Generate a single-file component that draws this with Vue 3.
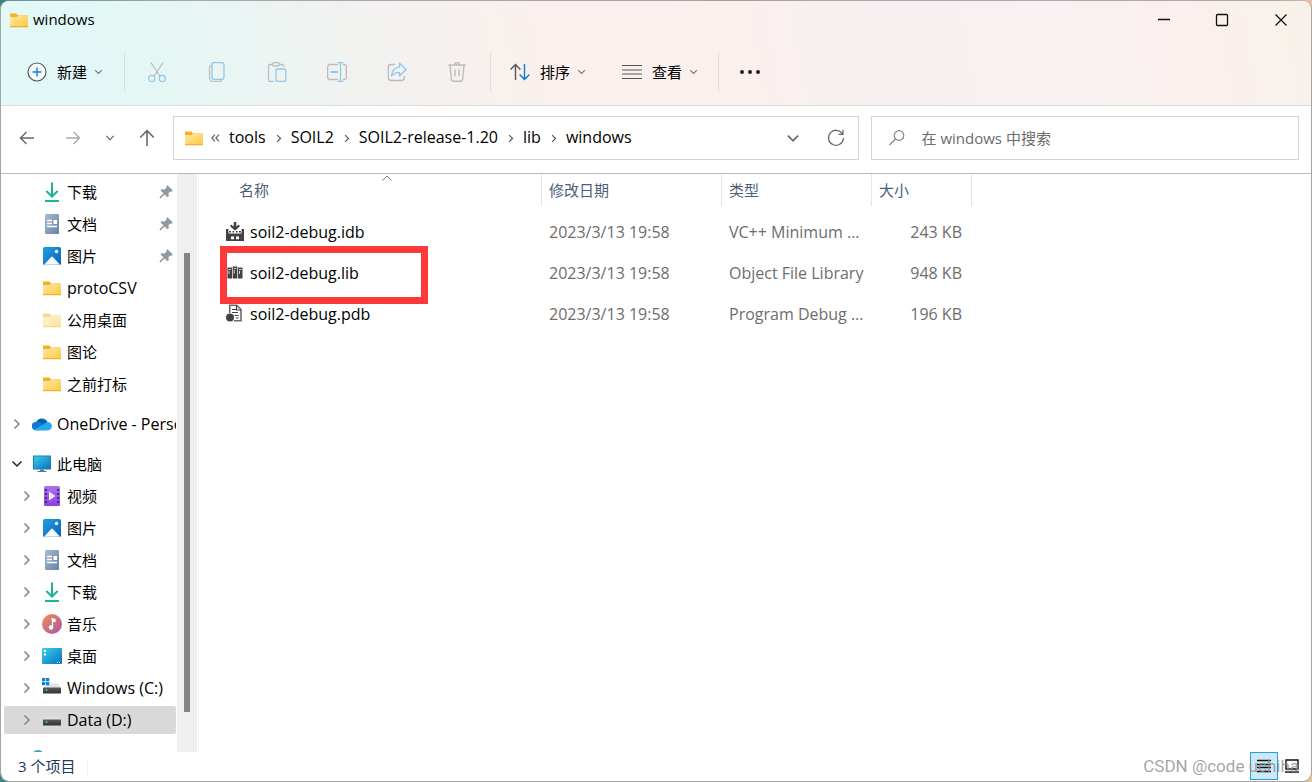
<script setup>
const places = [
  { name: '下载', icon: 'download', pinned: true },
  { name: '文档', icon: 'document', pinned: true },
  { name: '图片', icon: 'picture', pinned: true },
  { name: 'protoCSV', icon: 'folder', latin: true },
  { name: '公用桌面', icon: 'folder', faded: true },
  { name: '图论', icon: 'folder' },
  { name: '之前打标', icon: 'folder' },
  { name: 'OneDrive - Personal', icon: 'onedrive', root: true, arrow: 'right', latin: true },
  { name: '此电脑', icon: 'computer', root: true, arrow: 'down' },
  { name: '视频', icon: 'video', arrow: 'right' },
  { name: '图片', icon: 'picture', arrow: 'right' },
  { name: '文档', icon: 'document', arrow: 'right' },
  { name: '下载', icon: 'download', arrow: 'right' },
  { name: '音乐', icon: 'music', arrow: 'right' },
  { name: '桌面', icon: 'desktop', arrow: 'right' },
  { name: 'Windows (C:)', icon: 'drive-c', arrow: 'right', latin: true },
  { name: 'Data (D:)', icon: 'drive', arrow: 'right', selected: true, latin: true },
]

const crumbs = ['tools', 'SOIL2', 'SOIL2-release-1.20', 'lib', 'windows']

const files = [
  { name: 'soil2-debug.idb', icon: 'idb', date: '2023/3/13 19:58', type: 'VC++ Minimum ...', size: '243 KB' },
  { name: 'soil2-debug.lib', icon: 'lib', date: '2023/3/13 19:58', type: 'Object File Library', size: '948 KB', marked: true },
  { name: 'soil2-debug.pdb', icon: 'pdb', date: '2023/3/13 19:58', type: 'Program Debug ...', size: '196 KB' },
]

const tools = [
  { id: 'cut', label: '剪切' },
  { id: 'copy', label: '复制' },
  { id: 'paste', label: '粘贴' },
  { id: 'rename', label: '重命名' },
  { id: 'share', label: '共享' },
  { id: 'trash', label: '删除' },
]
</script>

<template>
  <svg class="sprite" aria-hidden="true">
    <defs>
      <linearGradient id="gFolder" x1="0" y1="0" x2="1" y2="1"><stop offset="0" stop-color="#ffe9a6" /><stop offset="1" stop-color="#ffc83d" /></linearGradient>
      <linearGradient id="gDoc" x1="0" y1="0" x2="1" y2="1"><stop offset="0" stop-color="#a9bdd3" /><stop offset="1" stop-color="#66819f" /></linearGradient>
      <linearGradient id="gPic" x1="0" y1="0" x2="1" y2="1"><stop offset="0" stop-color="#1f9fe6" /><stop offset="1" stop-color="#0a62b5" /></linearGradient>
      <linearGradient id="gScreen" x1="0" y1="0" x2="1" y2="1"><stop offset="0" stop-color="#36d3e4" /><stop offset="1" stop-color="#0c6fc4" /></linearGradient>
      <linearGradient id="gVideo" x1="0" y1="0" x2="0" y2="1"><stop offset="0" stop-color="#a972f0" /><stop offset="1" stop-color="#8840e0" /></linearGradient>
      <linearGradient id="gMusic" x1="0" y1="0" x2="1" y2="1"><stop offset="0" stop-color="#f19252" /><stop offset="1" stop-color="#a851aa" /></linearGradient>
      <linearGradient id="gDrive" x1="0" y1="0" x2="0" y2="1"><stop offset="0" stop-color="#5c5c5c" /><stop offset="1" stop-color="#303030" /></linearGradient>
    </defs>
    <symbol id="i-folder" viewBox="0 0 20 20">
      <path d="M1 3.500h6.500l1.600 2H19v11H1z" fill="#f5b21b" />
      <path d="M1 7h6.800l1.400-1.200H19v11H1z" fill="url(#gFolder)" />
      <path d="M1 16.200h18v1H1z" fill="#e9a91c" />
    </symbol>
    <symbol id="i-download" viewBox="0 0 20 20" fill="none" stroke="#1bb394" stroke-width="2">
      <path d="M10 .5v13.800M4.300 9l5.700 5.500L15.700 9M3 19h14" />
    </symbol>
    <symbol id="i-document" viewBox="0 0 20 20">
      <rect x="3" y="0" width="14" height="20" rx="1" fill="url(#gDoc)" />
      <path d="M5 6.500h5M5 9.500h5M5 12.500h10" stroke="#fff" stroke-width="1.300" />
      <path d="M11.500 6h3.500v4h-3.500z" fill="#fff" />
    </symbol>
    <symbol id="i-picture" viewBox="0 0 20 20">
      <rect x="1" y="1" width="18" height="18" rx="1.500" fill="url(#gPic)" />
      <path d="M2 18.800 9.200 11a1.200 1.200 0 0 1 1.700 0L18 18.800z" fill="#f4faff" />
      <circle cx="14.500" cy="5.500" r="1.700" fill="#fff" />
    </symbol>
    <symbol id="i-onedrive" viewBox="0 0 20 20">
      <path d="M4 8.200A6.400 6.400 0 0 1 15.600 8L11 13 3 16.200z" fill="#0364b8" />
      <path d="M3.800 8c2-.4 3.600.1 5 1.100l6 3.900-9.800 3.200H4.200A4.100 4.100 0 0 1 3.800 8z" fill="#0f78d4" />
      <path d="M15.500 8a4.200 4.200 0 0 1 .3 8.400H4.500a4 4 0 0 1-2.500-.9L10.500 11l3-2.200a5 5 0 0 1 2-.8z" fill="#28a8ea" />
    </symbol>
    <symbol id="i-computer" viewBox="0 0 20 20">
      <rect x="1" y="1.500" width="18" height="14" fill="#1580b5" />
      <rect x="2" y="2.500" width="16" height="12" fill="url(#gScreen)" />
      <path d="M8 15.500h4v1.500h2.500v1h-9v-1H8z" fill="#68737c" />
    </symbol>
    <symbol id="i-video" viewBox="0 0 20 20">
      <rect x="2" y="0" width="16" height="20" rx="1.500" fill="url(#gVideo)" />
      <path d="M4 3v15M16 3v15" stroke="#40207a" stroke-width="1.800" stroke-dasharray="2 2" />
      <path d="m7 5.500 6.500 4.500L7 14.500z" fill="#f3eafd" />
    </symbol>
    <symbol id="i-music" viewBox="0 0 20 20">
      <circle cx="10" cy="10" r="10" fill="url(#gMusic)" />
      <path d="M9.500 4.500 13 5.500V7.500l-2.500-.6v6.300" stroke="#fff" stroke-width="1.300" fill="#fff" />
      <circle cx="9" cy="13.500" r="2.200" fill="#fff" />
    </symbol>
    <symbol id="i-desktop" viewBox="0 0 20 20">
      <rect x="0" y="2" width="20" height="16" rx="1" fill="url(#gScreen)" />
      <path d="M2 4h2v2H2zM2 7.500h2v2H2zM15 16h1v1h-1zM17 16h1v1h-1z" fill="#fff" />
    </symbol>
    <symbol id="i-drive" viewBox="0 0 20 20">
      <path d="M4 6.500h12l3 4H1z" fill="#dfe1e3" />
      <rect x="1" y="9.500" width="18" height="6" rx=".5" fill="url(#gDrive)" />
      <circle cx="4.500" cy="12" r="1" fill="#3be04a" />
    </symbol>
    <symbol id="i-drive-c" viewBox="0 0 20 20">
      <path d="M7 5.500h9l3 4.500H1z" fill="#dfe1e3" />
      <rect x="1" y="9.500" width="18" height="6" rx=".5" fill="url(#gDrive)" />
      <circle cx="4.500" cy="12" r="1" fill="#3be04a" />
      <path d="M0 0h3.300v3.300H0zM4 0h3.300v3.300H4zM0 4h3.300v3.300H0zM4 4h3.300v3.300H4z" fill="#0a84d8" />
    </symbol>
    <symbol id="i-network" viewBox="0 0 20 20">
      <circle cx="6" cy="6" r="6" fill="#3f9fc0" />
    </symbol>
    <symbol id="i-pin" viewBox="0 0 14 14">
      <path d="M8.500.5 13.500 5.500 12.500 6.500 11.300 6.200 9.200 8.400 9.500 11 8.500 12 5.600 9.200 1.500 13.200.700 12.400 4.700 8.300 1.800 5.500 2.800 4.500 5.500 4.800 7.800 2.700 7.500 1.500z" fill="#8e9aa3" stroke="#8e9aa3" stroke-width=".5" />
    </symbol>
    <symbol id="i-right" viewBox="0 0 8 12" fill="none" stroke="currentColor" stroke-width="1.500">
      <path d="m1.500 1.500 4.500 4.500-4.500 4.500" />
    </symbol>
    <symbol id="i-down" viewBox="0 0 12 8" fill="none" stroke="currentColor" stroke-width="1.500">
      <path d="m1.500 1.500 4.500 4.500 4.500-4.500" />
    </symbol>
    <symbol id="i-more" viewBox="0 0 9 8" fill="none" stroke="#666" stroke-width="1.200">
      <path d="M4 .7.900 4 4 7.300M8 .7 4.900 4 8 7.300" />
    </symbol>
    <symbol id="i-new" viewBox="0 0 20 20" fill="none">
      <circle cx="10" cy="10" r="9" stroke="#555" stroke-width="1.200" fill="#f5fbfb" />
      <path d="M10 5.500v9M5.500 10h9" stroke="#0f7fd4" stroke-width="1.400" />
    </symbol>
    <symbol id="i-cut" viewBox="0 0 20 20" fill="none" stroke-width="1.200">
      <path d="M4 .7 12.800 14M16 .7 7.200 14" stroke="#b9bcbd" />
      <circle cx="4.700" cy="16.500" r="3.100" stroke="#8fc7eb" />
      <circle cx="15.300" cy="16.500" r="3.100" stroke="#8fc7eb" />
    </symbol>
    <symbol id="i-copy" viewBox="0 0 20 20" fill="none" stroke-width="1.300">
      <path d="M4.500 3.500a2 2 0 0 0-2 2V16a3.500 3.500 0 0 0 3.500 3.500h6.500a2 2 0 0 0 2-1.500" stroke="#bfc2c3" />
      <rect x="5" y=".7" width="12" height="16.600" rx="2" stroke="#8fc7eb" />
    </symbol>
    <symbol id="i-paste" viewBox="0 0 20 20" fill="none" stroke-width="1.300">
      <path d="M6 2.500H3.200A1.700 1.700 0 0 0 1.500 4.200v13.600a1.700 1.700 0 0 0 1.700 1.700H7M13 2.500h1.800a1.700 1.700 0 0 1 1.700 1.700V5" stroke="#bbbdbe" />
      <rect x="5.500" y=".7" width="7" height="3.300" rx="1.600" stroke="#bbbdbe" />
      <rect x="9" y="7" width="9.800" height="12.500" rx="1.400" stroke="#8fc7eb" />
    </symbol>
    <symbol id="i-rename" viewBox="0 0 20 20" fill="none" stroke-width="1.300">
      <path d="M11 2.500H2.500A2.200 2.200 0 0 0 .7 4.700v10.600a2.200 2.200 0 0 0 2 2.200H11M16 2.500h1.300a2 2 0 0 1 2 2.200v10.600a2 2 0 0 1-2 2.200H16" stroke="#bbb" />
      <path d="M10.700.7h5.600M10.700 19.300h5.600M13.500.7v18.600" stroke="#8fc7eb" />
      <path d="M3.500 10h7.500" stroke="#8fc7eb" stroke-width="1.800" />
    </symbol>
    <symbol id="i-share" viewBox="0 0 20 20" fill="none" stroke-width="1.300" stroke-linejoin="round">
      <path d="M8 2.500H4A2.700 2.700 0 0 0 1.300 5.200v10.600A2.700 2.700 0 0 0 4 18.500h10.600a2.700 2.700 0 0 0 2.700-2.700V14" stroke="#bbb" />
      <path d="M12.500 1.200 19.200 7.500l-6.700 6.300v-3.500c-3.500 0-6 1-8 3.700.5-5 3.300-8.700 8-9.200z" stroke="#8fc7eb" />
    </symbol>
    <symbol id="i-trash" viewBox="0 0 20 20" fill="none" stroke="#bdbab9" stroke-width="1.400">
      <path d="M1.500 3h17M3 3l1.300 14a2.400 2.400 0 0 0 2.300 2.200h6.800a2.400 2.400 0 0 0 2.300-2.200L17 3M7.500 3a2.500 2.500 0 0 1 5 0M8 7.500v7M12 7.500v7" />
    </symbol>
    <symbol id="i-sort" viewBox="0 0 20 20" fill="none" stroke-width="1.400">
      <path d="M5.500 18V2.500M.6 7.500l4.900-5 4.900 5" stroke="#555" />
      <path d="M14.500 2v15.500M9.600 12.500l4.900 5 4.900-5" stroke="#0f7bd6" />
    </symbol>
    <symbol id="i-view" viewBox="0 0 20 20" stroke="#555" stroke-width="1.200">
      <path d="M0 3.500h20M0 8h20M0 12h20M0 16.500h20" />
    </symbol>
    <symbol id="i-dots" viewBox="0 0 22 20" fill="#222">
      <circle cx="3" cy="10" r="2" /><circle cx="11" cy="10" r="2" /><circle cx="19" cy="10" r="2" />
    </symbol>
    <symbol id="i-arrow" viewBox="0 0 16 16" fill="none" stroke="currentColor" stroke-width="1.400">
      <path d="M15 8H1.500M7.500 2l-6 6 6 6" />
    </symbol>
    <symbol id="i-refresh" viewBox="0 0 20 20" fill="none" stroke="#6b6b6b" stroke-width="1.300">
      <path d="M16.500 6A7.500 7.500 0 1 0 17.500 10M17 1.800v4.500h-4.500" />
    </symbol>
    <symbol id="i-search" viewBox="0 0 18 18" fill="none" stroke="#858585" stroke-width="1.200">
      <circle cx="11" cy="6.500" r="4.800" /><path d="m7.500 10-6 6" />
    </symbol>
    <symbol id="i-idb" viewBox="0 0 20 20" fill="#424242">
      <path d="M8.700 0h2.600v4.500l2.600-2 1 1.800L10 8.800 5.100 4.300l1-1.800 2.600 2z" />
      <path d="M1 7h2.500v3h13V7H19v12H1z" />
      <path d="M3.500 8.500h13v3h-13z" fill="#fff" />
      <path d="M4 9h2v1.500H4zM7.500 9H9v1.500H7.500zM11 9h1.500v1.500H11zM14 9h2v1.500h-2z" />
      <path d="M6 14.500h3v2.800H6zM11 14.500h3v2.800h-3z" fill="#fff" />
    </symbol>
    <symbol id="i-lib" viewBox="0 0 20 20">
      <path d="M2.500 4.500h4.500v11H2.500zM7.700 3.500h4.600v12H7.700zM13 4.500h4.500v11H13z" fill="#424242" />
      <path d="M3.500 6h2.300v1H3.500zM3.500 8h1v3h-1zM9 5h2v1H9zM8.700 7h1v3.500h-1zM14 6h2.500v1H14zM14 8h1v3h-1z" fill="#d5d5d5" />
    </symbol>
    <symbol id="i-pdb" viewBox="0 0 20 20">
      <path d="M4.700 9V1.200h7L16 5.500v11.300H9" fill="#fff" stroke="#6b6b6b" stroke-width="1.600" />
      <path d="M7 5.500h4M7 8.500h6M9.500 11.500h4M11 14h2.500M11.500 1.500V6H16" stroke="#424242" stroke-width="1.200" fill="none" />
      <circle cx="5" cy="13.500" r="4" fill="#424242" />
    </symbol>
  </svg>

  <main class="window">
    <header class="chrome">
      <div class="titlebar">
        <svg class="ic20"><use href="#i-folder" /></svg>
        <h1>windows</h1>
        <div class="controls">
          <button aria-label="最小化"><svg viewBox="0 0 14 14"><path d="M1 6.500h12" /></svg></button>
          <button aria-label="最大化"><svg viewBox="0 0 14 14"><rect x="1.500" y="1.500" width="11" height="11" rx="1" /></svg></button>
          <button aria-label="关闭"><svg viewBox="0 0 14 14"><path d="m1.500 1.500 11 11M12.500 1.500l-11 11" /></svg></button>
        </div>
      </div>
      <div class="toolbar">
        <button class="menu"><svg class="ic20"><use href="#i-new" /></svg>新建<svg class="chev"><use href="#i-down" /></svg></button>
        <span class="sep first"></span>
        <button v-for="t in tools" :key="t.id" class="tool" :aria-label="t.label"><svg class="ic20"><use :href="'#i-' + t.id" /></svg></button>
        <span class="sep second"></span>
        <button class="menu"><svg class="ic20"><use href="#i-sort" /></svg>排序<svg class="chev"><use href="#i-down" /></svg></button>
        <button class="menu view"><svg class="ic20"><use href="#i-view" /></svg>查看<svg class="chev"><use href="#i-down" /></svg></button>
        <span class="sep third"></span>
        <button aria-label="更多"><svg class="dots"><use href="#i-dots" /></svg></button>
      </div>
    </header>

    <nav class="navbar">
      <div class="arrows">
        <button aria-label="后退"><svg class="ic16"><use href="#i-arrow" /></svg></button>
        <button aria-label="前进" class="dim"><svg class="ic16 flip"><use href="#i-arrow" /></svg></button>
        <button aria-label="最近"><svg class="recent"><use href="#i-down" /></svg></button>
        <button aria-label="向上"><svg class="ic18 up"><use href="#i-arrow" /></svg></button>
      </div>
      <div class="boxes">
        <div class="address">
          <svg class="ic20"><use href="#i-folder" /></svg>
          <svg class="more"><use href="#i-more" /></svg>
          <template v-for="(c, i) in crumbs" :key="c">
            <svg v-if="i" class="crumb-arrow"><use href="#i-right" /></svg>
            <a href="#">{{ c }}</a>
          </template>
          <button class="drop" aria-label="历史记录"><svg class="drop-ic"><use href="#i-down" /></svg></button>
          <button aria-label="刷新"><svg class="ic20"><use href="#i-refresh" /></svg></button>
        </div>
        <label class="search">
          <svg class="ic18"><use href="#i-search" /></svg>
          <input type="text" placeholder="在 windows 中搜索" aria-label="在 windows 中搜索" />
        </label>
      </div>
    </nav>

    <div class="body">
      <aside class="sidebar">
        <ul class="tree">
          <li v-for="(p, i) in places" :key="i" :class="{ root: p.root, selected: p.selected }">
            <span class="twist"><svg v-if="p.arrow" :class="p.arrow"><use :href="'#i-' + p.arrow" /></svg></span>
            <svg class="ic20" :class="{ faded: p.faded }"><use :href="'#i-' + p.icon" /></svg>
            <a href="#" :class="{ latin: p.latin }">{{ p.name }}</a>
            <svg v-if="p.pinned" class="pin"><use href="#i-pin" /></svg>
          </li>
          <li class="root"><span class="twist"></span><svg class="ic20"><use href="#i-network" /></svg></li>
        </ul>
        <div class="track"><div class="thumb"></div></div>
      </aside>

      <section class="files">
        <table>
          <colgroup><col class="c-name" /><col class="c-date" /><col class="c-type" /><col class="c-size" /></colgroup>
          <thead>
            <tr>
              <th class="name">名称<svg class="sorted" viewBox="0 0 10 6"><path d="m.5 5.500 4.500-4.500 4.500 4.500" /></svg></th>
              <th>修改日期</th><th>类型</th><th>大小</th>
            </tr>
          </thead>
          <tbody class="latin">
            <tr v-for="f in files" :key="f.name">
              <td class="name">
                <div class="file"><svg class="ic20"><use :href="'#i-' + f.icon" /></svg>{{ f.name }}</div>
                <span v-if="f.marked" class="mark"></span>
              </td>
              <td>{{ f.date }}</td><td>{{ f.type }}</td><td class="size">{{ f.size }}</td>
            </tr>
          </tbody>
        </table>
      </section>
    </div>

    <footer class="status">
      <span class="count">3 个项目</span>
      <div class="modes">
        <button class="active" aria-label="详细信息"><svg viewBox="0 0 14 14"><path d="M0 1.500h14M0 5.500h14M0 8.500h14M0 12.500h14" /></svg></button>
        <button aria-label="大图标"><svg viewBox="0 0 14 14"><path d="M1 1h12v9H1zM0 13h14" /></svg></button>
      </div>
      <span class="watermark">CSDN @code uchiha</span>
    </footer>
  </main>
</template>

<style>
body {
  background: linear-gradient(90deg, #3b8583 0, #5f9c9c 8%, #a9a4ac 14%, #a9a4ac 50%, #a98f8a 56%, #b4a9b0 64%, #b4a9b0 97%, #e8c4a0 100%);
}
</style>

<style scoped>
.sprite { position: absolute; width: 0; height: 0; }
svg { display: block; flex: none; }
button { border: 0; padding: 0; background: none; font: inherit; color: inherit; display: flex; align-items: center; }
a { color: inherit; text-decoration: none; }
.ic16 { width: 16px; height: 16px; }
.ic18 { width: 18px; height: 18px; }
.ic20 { width: 20px; height: 20px; }
.window {
  box-sizing: border-box;
  height: 100vh;
  display: flex;
  flex-direction: column;
  border: 1px solid #a5a5a5;
  border-top-color: #a9a4ac66;
  border-radius: 9px;
  overflow: hidden;
  background: #fff;
  background-clip: padding-box;
  color: #000;
  font: 15px/20px "Open Sans", "Noto Sans CJK SC", sans-serif;
}
.latin { font-size: 16px; }
.chrome {
  border-bottom: 1px solid #dedcda;
  background: linear-gradient(80deg, #e1f9f8 0%, #e4f7f5 12%, #f2f2f0 28%, #faf0ed 42%, #faf0ee 56%, #f6f0f0 68%, #f7f1f1 80%, #faf0ee 90%, #f8f1e9 100%);
}
.titlebar { height: 37px; display: flex; align-items: center; padding-left: 8px; }
.titlebar h1 { margin: 0 auto 0 4px; padding-bottom: 2px; font-size: 15px; font-weight: 400; }
.controls { display: flex; }
.controls button { width: 58px; height: 36px; justify-content: center; }
.controls svg { width: 14px; height: 14px; fill: none; stroke: #111; stroke-width: 1.3; }
.controls button:last-child { width: 60px; }
.toolbar { height: 67px; display: flex; align-items: center; padding-left: 26px; }
.menu { gap: 10px; }
.view { margin-left: 36px; }
.chev { width: 9px; height: 6px; color: #777; margin-left: -3px; }
.sep { width: 1px; height: 40px; background: #00000014; }
.first { margin: 0 2px 0 21px; }
.second { margin: 0 19px 0 3px; }
.third { margin: 0 20px 0 20px; }
.tool { width: 60px; justify-content: center; }
.dots { width: 22px; height: 20px; }
.navbar { box-sizing: border-box; height: 68px; display: flex; align-items: center; border-bottom: 1px solid #b9b9b9; padding: 0 12px 3px 18px; }
.arrows { display: flex; align-items: center; color: #666; width: 154px; flex: none; }
.arrows button { margin-right: 30px; }
.arrows .dim { color: #aaa; margin-right: 24px; }
.arrows .dim + button { margin-right: 23px; }
.recent { width: 10px; height: 8px; }
.flip { transform: rotate(180deg); }
.up { transform: rotate(90deg); }
.boxes { flex: 1; display: grid; grid-template-columns: 8fr 5fr; gap: 12px; }
.address, .search { box-sizing: border-box; height: 44px; border: 1px solid #d5d5d5; display: flex; align-items: center; min-width: 0; }
.address { padding: 0 12px 0 10px; white-space: nowrap; font-size: 16px; }
.address a { padding-bottom: 2px; }
.more { width: 9px; height: 8px; margin: 0 9px 0 7px; }
.crumb-arrow { width: 6px; height: 9px; margin: 0 9px 0 10px; color: #555; }
.drop { margin: 0 26px 0 auto; color: #666; }
.drop-ic { width: 14px; height: 9px; }
.search { padding-left: 16px; gap: 16px; }
.search input { flex: 1; min-width: 0; border: 0; outline: 0; padding: 0; background: none; font: inherit; }
.search input::placeholder { color: #6b6b6b; opacity: 1; }
.body { flex: 1; min-height: 0; display: flex; }
.sidebar { width: 198px; flex: none; box-sizing: border-box; display: flex; border-right: 1px solid #f4f4f4; overflow: hidden; }
.tree { list-style: none; margin: 0; padding: 2px 0 0 3px; width: 176px; box-sizing: border-box; height: 0; }
.tree li { box-sizing: border-box; height: 28px; margin: 2px 0 4px; padding-left: 17px; display: flex; align-items: center; width: 172px; border-radius: 2px; white-space: nowrap; }
.tree li.root { padding-left: 7px; margin-top: 12px; }
.tree li.selected { background: #d9d9d9; }
.tree a { margin-left: 5px; flex: 1; min-width: 0; overflow: hidden; }
.tree .faded { opacity: .5; }
.twist { width: 21px; flex: none; color: #858585; }
.twist .right { width: 8px; height: 12px; margin-left: 2px; }
.twist .down { width: 12px; height: 8px; color: #222; }
.pin { width: 14px; height: 14px; margin-right: 3px; }
.track { width: 20px; margin-right: 1px; background: #efefef; display: flex; justify-content: center; box-sizing: border-box; padding: 79px 0 40px; }
.thumb { width: 6px; background: #858585; }
.files { flex: 1; min-width: 0; overflow: hidden; }
table { table-layout: fixed; border-collapse: separate; border-spacing: 0; width: 773px; }
.c-name { width: 343px; }
.c-date { width: 180px; }
.c-type { width: 150px; }
.c-size { width: 100px; }
th { box-sizing: border-box; height: 32px; padding: 0 7px; border-right: 1px solid #e3e3e3; text-align: left; font-weight: 400; color: #4c607a; position: relative; }
th.name { padding-left: 40px; }
.sorted { position: absolute; left: 183px; top: 1px; width: 10px; height: 6px; fill: none; stroke: #777; }
thead::after { content: ""; display: block; height: 5px; }
td { height: 41px; padding: 0 10px 0 7px; color: #6d6d6d; white-space: nowrap; box-sizing: border-box; }
td.name { padding-left: 26px; color: #000; position: relative; }
td.size { text-align: right; }
.file { display: flex; align-items: center; gap: 5px; }
.mark { position: absolute; left: 21px; top: -6px; width: 208px; height: 58px; box-sizing: border-box; border: 7px solid #fd3a39; }
.status { height: 29px; flex: none; position: relative; display: flex; align-items: flex-start; justify-content: space-between; color: #1e395b; }
.count { padding: 4px 13px 0 17px; }
.count::after { content: ""; display: inline-block; height: 14px; width: 1px; margin-left: 12px; background: #eee; vertical-align: middle; }
.modes { display: flex; padding-right: 6px; }
.modes button { box-sizing: border-box; width: 27px; height: 28px; justify-content: center; }
.modes .active { width: 28px; border: 1px solid #26a0da; background: #cde8f7; }
.modes svg { width: 14px; height: 14px; fill: none; stroke: #111; stroke-width: 1.4; }
.watermark { position: absolute; right: 12px; top: 4px; font-size: 17px; color: #8f8f8fd0; font-family: Roboto, sans-serif; }
</style>
